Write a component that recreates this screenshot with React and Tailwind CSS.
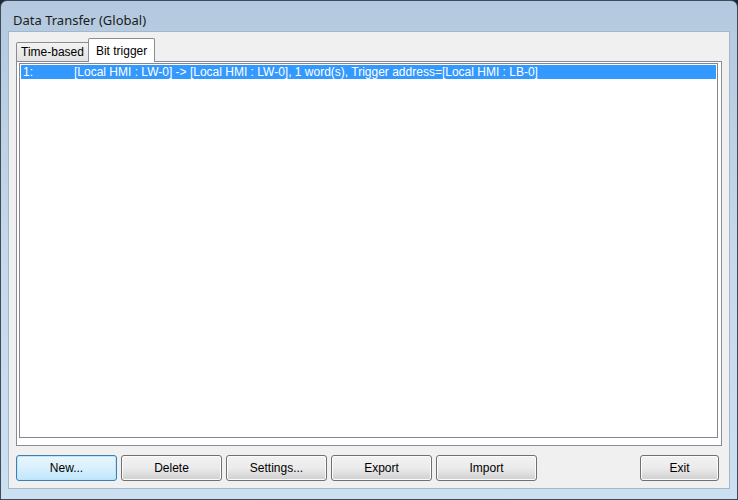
export default function App() {
  const buttons = [
    { label: "New...", primary: true },
    { label: "Delete" },
    { label: "Settings..." },
    { label: "Export" },
    { label: "Import" },
  ];

  const Btn = ({ label, primary, w = "w-[101px]" }) => (
    <button
      className={
        primary
          ? `${w} h-[26px] rounded-[3px] border border-[#3c7fb1] bg-gradient-to-b from-[#eaf6fd] via-[#d9f0fc] to-[#bee6fd] text-[12px] text-black shadow-[inset_0_0_0_1px_#bde4f8]`
          : `${w} h-[26px] rounded-[3px] border border-[#707070] bg-gradient-to-b from-[#f2f2f2] via-[#ebebeb] to-[#cfcfcf] text-[12px] text-black shadow-[inset_0_0_0_1px_#fcfcfc]`
      }
      style={{ fontFamily: '"Liberation Sans", Arial, sans-serif' }}
    >
      {label}
    </button>
  );

  return (
    <div className="w-[738px] h-[500px] bg-[#1e2630] overflow-hidden">
      <div className="w-full h-full rounded-t-[7px] border border-[#3d4b5a] bg-gradient-to-b from-[#b4c9df] via-[#c6d8ea] to-[#cde0f1] flex flex-col">
        {/* caption */}
        <div
          className="h-[30px] pl-[12px] pt-[10px] leading-[18px] text-[13px] text-[#1b1b1b]"
          style={{ fontFamily: '"Noto Sans", "Open Sans", sans-serif' }}
        >
          Data Transfer (Global)
        </div>

        {/* client area */}
        <div className="mx-[7px] h-[458px] border border-[#a3b7cb] bg-[#f0f0f0] flex flex-col px-[7px] pb-[7px]">
          {/* tabs */}
          <div
            className="flex items-end h-[29px] text-[12px] text-black"
            style={{ fontFamily: '"Liberation Sans", Arial, sans-serif' }}
          >
            <div className="h-[19px] px-[4px] flex items-center border border-b-0 border-[#898c95] bg-gradient-to-b from-[#f3f3f3] to-[#e3e3e3] rounded-tl-[2px]">
              Time-based
            </div>
            <div className="h-[24px] px-[7px] -ml-[1px] flex items-start pt-[3px] border border-b-0 border-[#898c95] bg-white rounded-t-[2px] relative z-10 -mb-[1px]">
              Bit trigger
            </div>
          </div>

          {/* tab page */}
          <div className="h-[385px] border border-[#898c95] bg-white pt-[1px] pl-[2px] pr-[3px] pb-[7px]">
            <div className="h-full border border-[#828790] bg-white p-[1px]">
              <div
                className="h-[14px] bg-[#3399ff] text-white text-[12px] leading-[14px] flex"
                style={{ fontFamily: '"Liberation Sans", Arial, sans-serif' }}
              >
                <span className="w-[53px] pl-[2px]">1:</span>
                <span>
                  [Local HMI : LW-0] -&gt; [Local HMI : LW-0], 1 word(s), Trigger address=[Local HMI : LB-0]
                </span>
              </div>
            </div>
          </div>

          {/* command buttons */}
          <div className="mt-auto flex items-center gap-[4px]">
            {buttons.map((b) => (
              <Btn key={b.label} {...b} />
            ))}
            <div className="flex-1" />
            <div className="mr-[3px]">
              <Btn label="Exit" w="w-[79px]" />
            </div>
          </div>
        </div>
      </div>
    </div>
  );
}
